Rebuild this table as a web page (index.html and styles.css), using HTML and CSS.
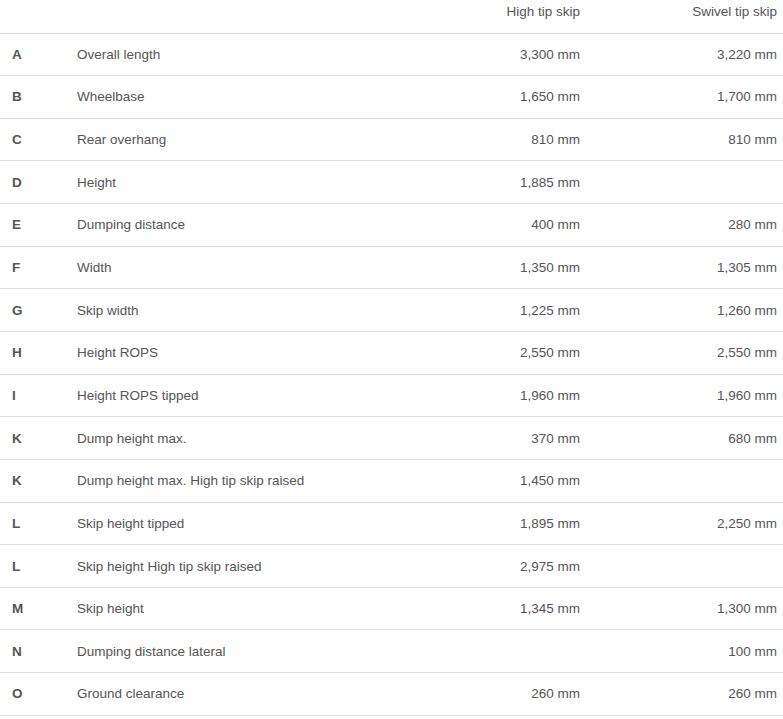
FILE: index.html
```html
<!DOCTYPE html>
<html>
<head>
<meta charset="utf-8">
<link rel="stylesheet" href="styles.css">
</head>
<body>
<table class="specs">
  <colgroup>
    <col class="c-key"><col class="c-label"><col class="c-val"><col class="c-val2">
  </colgroup>
  <thead>
    <tr><th></th><th></th><th class="num">High tip skip</th><th class="num">Swivel tip skip</th></tr>
  </thead>
  <tbody>
    <tr><td class="key">A</td><td>Overall length</td><td class="num">3,300 mm</td><td class="num">3,220 mm</td></tr>
    <tr><td class="key">B</td><td>Wheelbase</td><td class="num">1,650 mm</td><td class="num">1,700 mm</td></tr>
    <tr><td class="key">C</td><td>Rear overhang</td><td class="num">810 mm</td><td class="num">810 mm</td></tr>
    <tr><td class="key">D</td><td>Height</td><td class="num">1,885 mm</td><td class="num"></td></tr>
    <tr><td class="key">E</td><td>Dumping distance</td><td class="num">400 mm</td><td class="num">280 mm</td></tr>
    <tr><td class="key">F</td><td>Width</td><td class="num">1,350 mm</td><td class="num">1,305 mm</td></tr>
    <tr><td class="key">G</td><td>Skip width</td><td class="num">1,225 mm</td><td class="num">1,260 mm</td></tr>
    <tr><td class="key">H</td><td>Height ROPS</td><td class="num">2,550 mm</td><td class="num">2,550 mm</td></tr>
    <tr><td class="key">I</td><td>Height ROPS tipped</td><td class="num">1,960 mm</td><td class="num">1,960 mm</td></tr>
    <tr><td class="key">K</td><td>Dump height max.</td><td class="num">370 mm</td><td class="num">680 mm</td></tr>
    <tr><td class="key">K</td><td>Dump height max. High tip skip raised</td><td class="num">1,450 mm</td><td class="num"></td></tr>
    <tr><td class="key">L</td><td>Skip height tipped</td><td class="num">1,895 mm</td><td class="num">2,250 mm</td></tr>
    <tr><td class="key">L</td><td>Skip height High tip skip raised</td><td class="num">2,975 mm</td><td class="num"></td></tr>
    <tr><td class="key">M</td><td>Skip height</td><td class="num">1,345 mm</td><td class="num">1,300 mm</td></tr>
    <tr><td class="key">N</td><td>Dumping distance lateral</td><td class="num"></td><td class="num">100 mm</td></tr>
    <tr><td class="key">O</td><td>Ground clearance</td><td class="num">260 mm</td><td class="num">260 mm</td></tr>
  </tbody>
</table>
</body>
</html>
```
FILE: styles.css
```css
html, body {
  margin: 0;
  padding: 0;
  background: #fff;
}
.specs {
  width: 783px;
  border-collapse: collapse;
  table-layout: fixed;
  font-family: "Liberation Sans", Arial, sans-serif;
  font-size: 13.5px;
  color: #555;
}
.c-key { width: 65px; }
.c-label { width: 321px; }
.c-val { width: 200px; }
.c-val2 { width: 197px; }
.specs th {
  font-weight: normal;
  height: 33px;
  padding: 0 6px 10px 12px;
  border-bottom: 1px solid #ddd;
  text-align: left;
  vertical-align: middle;
  box-sizing: border-box;
}
.specs td {
  height: 42.65px;
  padding: 0 6px 0 12px;
  border-bottom: 1px solid #ddd;
  vertical-align: middle;
  box-sizing: border-box;
}
.specs .num { text-align: right; }
.specs .key { font-weight: bold; }
```
